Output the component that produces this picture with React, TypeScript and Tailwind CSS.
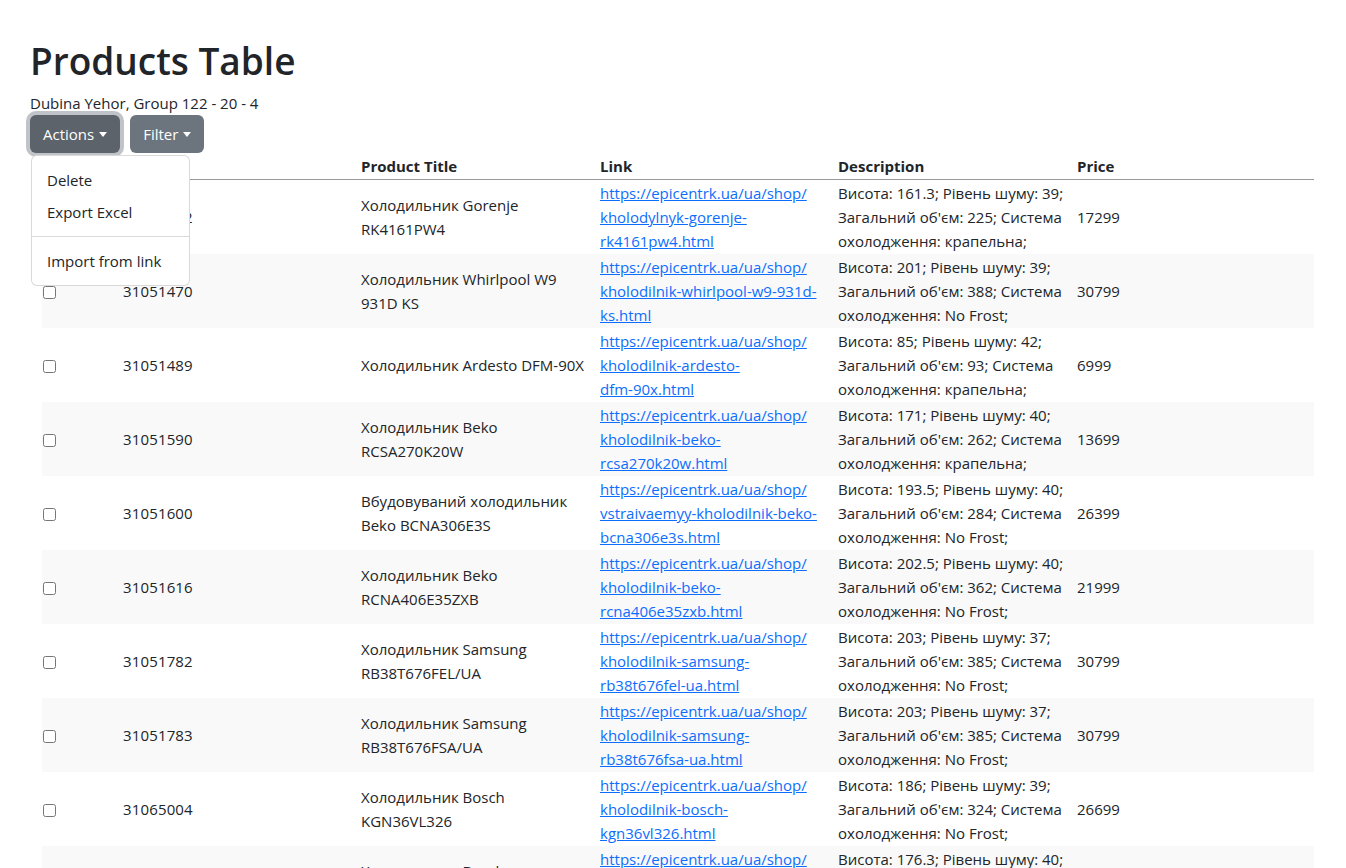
import React from 'react';

interface Product {
  id: string;
  title: string[];
  link: string[];
  desc: string[];
  price: string;
}

const shop = 'https://epicentrk.ua/ua/shop/';

const products: Product[] = [
  {
    id: '31051392',
    title: ['Холодильник Gorenje', 'RK4161PW4'],
    link: [shop, 'kholodylnyk-gorenje-', 'rk4161pw4.html'],
    desc: ['Висота: 161.3; Рівень шуму: 39;', "Загальний об'єм: 225; Система", 'охолодження: крапельна;'],
    price: '17299',
  },
  {
    id: '31051470',
    title: ['Холодильник Whirlpool W9', '931D KS'],
    link: [shop, 'kholodilnik-whirlpool-w9-931d-', 'ks.html'],
    desc: ['Висота: 201; Рівень шуму: 39;', "Загальний об'єм: 388; Система", 'охолодження: No Frost;'],
    price: '30799',
  },
  {
    id: '31051489',
    title: ['Холодильник Ardesto DFM-90X'],
    link: [shop, 'kholodilnik-ardesto-', 'dfm-90x.html'],
    desc: ['Висота: 85; Рівень шуму: 42;', "Загальний об'єм: 93; Система", 'охолодження: крапельна;'],
    price: '6999',
  },
  {
    id: '31051590',
    title: ['Холодильник Beko', 'RCSA270K20W'],
    link: [shop, 'kholodilnik-beko-', 'rcsa270k20w.html'],
    desc: ['Висота: 171; Рівень шуму: 40;', "Загальний об'єм: 262; Система", 'охолодження: крапельна;'],
    price: '13699',
  },
  {
    id: '31051600',
    title: ['Вбудовуваний холодильник', 'Beko BCNA306E3S'],
    link: [shop, 'vstraivaemyy-kholodilnik-beko-', 'bcna306e3s.html'],
    desc: ['Висота: 193.5; Рівень шуму: 40;', "Загальний об'єм: 284; Система", 'охолодження: No Frost;'],
    price: '26399',
  },
  {
    id: '31051616',
    title: ['Холодильник Beko', 'RCNA406E35ZXB'],
    link: [shop, 'kholodilnik-beko-', 'rcna406e35zxb.html'],
    desc: ['Висота: 202.5; Рівень шуму: 40;', "Загальний об'єм: 362; Система", 'охолодження: No Frost;'],
    price: '21999',
  },
  {
    id: '31051782',
    title: ['Холодильник Samsung', 'RB38T676FEL/UA'],
    link: [shop, 'kholodilnik-samsung-', 'rb38t676fel-ua.html'],
    desc: ['Висота: 203; Рівень шуму: 37;', "Загальний об'єм: 385; Система", 'охолодження: No Frost;'],
    price: '30799',
  },
  {
    id: '31051783',
    title: ['Холодильник Samsung', 'RB38T676FSA/UA'],
    link: [shop, 'kholodilnik-samsung-', 'rb38t676fsa-ua.html'],
    desc: ['Висота: 203; Рівень шуму: 37;', "Загальний об'єм: 385; Система", 'охолодження: No Frost;'],
    price: '30799',
  },
  {
    id: '31065004',
    title: ['Холодильник Bosch', 'KGN36VL326'],
    link: [shop, 'kholodilnik-bosch-', 'kgn36vl326.html'],
    desc: ['Висота: 186; Рівень шуму: 39;', "Загальний об'єм: 324; Система", 'охолодження: No Frost;'],
    price: '26699',
  },
  {
    id: '31065011',
    title: ['Холодильник Bosch', 'KGN39VI306'],
    link: [shop, 'kholodilnik-bosch-', 'kgn39vi306.html'],
    desc: ['Висота: 176.3; Рівень шуму: 40;', "Загальний об'єм: 289; Система", 'охолодження: No Frost;'],
    price: '24999',
  },
];

const Lines = ({ lines }: { lines: string[] }) => (
  <>
    {lines.map((l, i) => (
      <React.Fragment key={i}>
        {i > 0 && <br />}
        {l}
      </React.Fragment>
    ))}
  </>
);

const Caret = () => (
  <span className="ml-[5px] inline-block h-0 w-0 border-x-[4px] border-t-[5px] border-x-transparent border-t-white align-[3px]" />
);

export default function App() {
  return (
    <div className="min-h-screen bg-white font-['Open_Sans',sans-serif] text-[15px] leading-6 text-[#212529]">
      <div className="px-[30px] pt-[37px]">
        <h1 className="mb-[6px] text-[37px] font-semibold leading-[48px]">Products Table</h1>
        <p>Dubina Yehor, Group 122 - 20 - 4</p>

        <div className="relative flex gap-[10px]">
          <button className="h-[38px] rounded-[6px] bg-[#5c636a] px-[13px] text-white shadow-[0_0_0_4px_rgba(130,138,145,0.5)]">
            Actions
            <Caret />
          </button>
          <button className="h-[38px] rounded-[6px] bg-[#6c757d] px-[13px] text-white">
            Filter
            <Caret />
          </button>

          {/* открытое меню */}
          <div className="absolute left-[1px] top-[40px] z-10 w-[159px] rounded-[6px] border border-black/15 bg-white py-2">
            <div className="px-[15px] py-1">Delete</div>
            <div className="px-[15px] py-1">Export Excel</div>
            <div className="my-2 border-t border-black/15" />
            <div className="px-[15px] py-1">Import from link</div>
          </div>
        </div>

        <table className="ml-[12px] w-[1272px] table-fixed border-collapse text-left">
          <colgroup>
            <col className="w-[73px]" />
            <col className="w-[238px]" />
            <col className="w-[239px]" />
            <col className="w-[238px]" />
            <col className="w-[239px]" />
            <col />
          </colgroup>
          <thead>
            <tr className="border-b border-[#9a9a9a]">
              <th className="py-px pl-px font-bold"></th>
              <th className="px-2 py-px font-bold">ID</th>
              <th className="px-2 py-px font-bold">Product Title</th>
              <th className="px-2 py-px font-bold">Link</th>
              <th className="px-2 py-px font-bold">Description</th>
              <th className="px-2 py-px font-bold">Price</th>
            </tr>
          </thead>
          <tbody>
            {products.map((p, i) => (
              <tr key={p.id} className={i % 2 === 1 ? 'bg-[#f9f9f9]' : 'bg-white'}>
                <td className="py-px pl-px align-middle">
                  <input type="checkbox" className="m-0 mt-[2px] block h-[13px] w-[13px]" />
                </td>
                <td className="px-2 py-px align-middle tracking-[0.15px]">{p.id}</td>
                <td className="whitespace-nowrap px-2 py-px align-middle">
                  <Lines lines={p.title} />
                </td>
                <td className="whitespace-nowrap px-2 py-px align-middle">
                  <a href="#" className="text-[#0d6efd] underline">
                    <Lines lines={p.link} />
                  </a>
                </td>
                <td className="whitespace-nowrap px-2 py-px align-middle">
                  <Lines lines={p.desc} />
                </td>
                <td className="px-2 py-px align-middle">{p.price}</td>
              </tr>
            ))}
          </tbody>
        </table>
      </div>
    </div>
  );
}
